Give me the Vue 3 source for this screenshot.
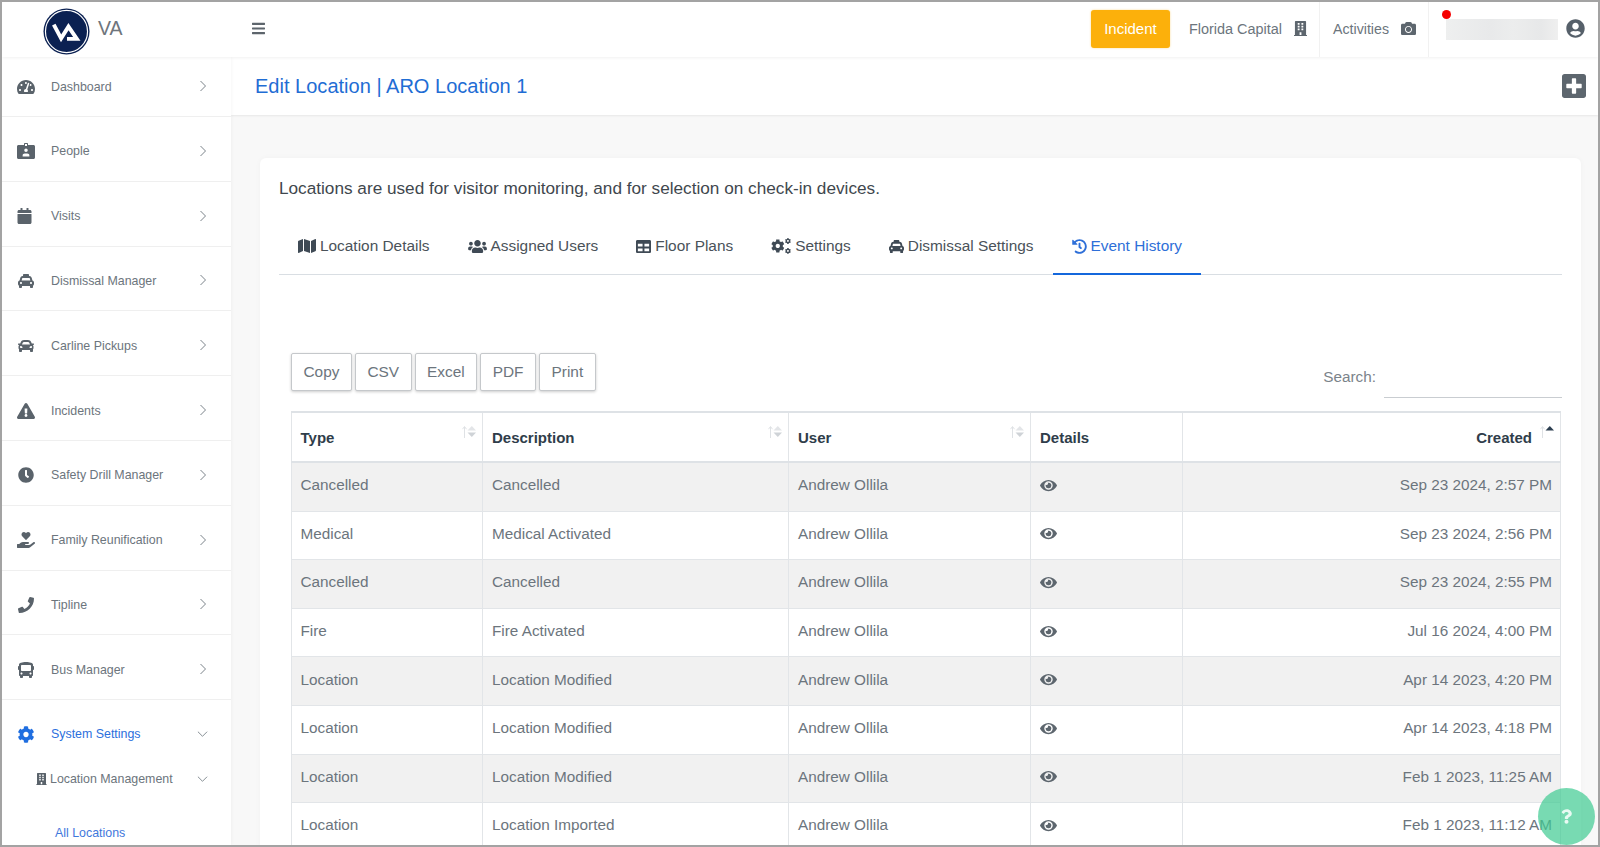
<script setup>
const icons = {
  bars: [448, 'M16 132h416c8.837 0 16-7.163 16-16V76c0-8.837-7.163-16-16-16H16C7.163 60 0 67.163 0 76v40c0 8.837 7.163 16 16 16zm0 160h416c8.837 0 16-7.163 16-16v-40c0-8.837-7.163-16-16-16H16c-8.837 0-16 7.163-16 16v40c0 8.837 7.163 16 16 16zm0 160h416c8.837 0 16-7.163 16-16v-40c0-8.837-7.163-16-16-16H16c-8.837 0-16 7.163-16 16v40c0 8.837 7.163 16 16 16z'],
  gauge: [576, 'M288 32C128.94 32 0 160.94 0 320c0 52.8 14.25 102.26 39.06 144.8 5.61 9.62 16.3 15.2 27.44 15.2h443c11.14 0 21.83-5.58 27.44-15.2C561.75 422.26 576 372.8 576 320c0-159.06-128.94-288-288-288zm0 64c14.71 0 26.58 10.13 30.32 23.65-1.11 2.26-2.64 4.23-3.45 6.67l-9.22 27.67c-5.13 3.49-10.97 6.01-17.64 6.01-17.67 0-32-14.33-32-32S270.33 96 288 96zM96 384c-17.67 0-32-14.33-32-32s14.33-32 32-32 32 14.33 32 32-14.33 32-32 32zm48-160c-17.67 0-32-14.33-32-32s14.33-32 32-32 32 14.33 32 32-14.33 32-32 32zm246.77-72.41l-61.33 184C343.13 347.33 352 364.54 352 384c0 11.72-3.38 22.55-8.88 32H232.88c-5.5-9.45-8.88-20.28-8.88-32 0-33.94 26.5-61.43 59.9-63.59l61.34-184.01c4.17-12.56 17.73-19.45 30.36-15.17 12.57 4.19 19.35 17.79 15.17 30.36zm14.66 57.2l15.52-46.55c3.47-1.29 7.13-2.23 11.05-2.23 17.67 0 32 14.33 32 32s-14.33 32-32 32c-11.38-.01-20.89-6.28-26.57-15.22zM480 384c-17.67 0-32-14.33-32-32s14.33-32 32-32 32 14.33 32 32-14.33 32-32 32z'],
  badge: [576, 'M48 64h176V32c0-17.7 14.3-32 32-32h64c17.7 0 32 14.3 32 32v32h176c26.5 0 48 21.500 48 48v352c0 26.500-21.500 48-48 48H48c-26.500 0-48-21.500-48-48V112c0-26.500 21.500-48 48-48zM256 32v64h64V32zM288 176a56 56 0 1 0 0 112 56 56 0 0 0 0-112zM180 432h216v-34c0-36-30-60-66-60h-84c-36 0-66 24-66 60z'],
  calendar: [448, 'M12 192h424c6.6 0 12 5.4 12 12v260c0 26.5-21.5 48-48 48H48c-26.5 0-48-21.5-48-48V204c0-6.6 5.4-12 12-12zm436-44v-36c0-26.5-21.5-48-48-48h-48V12c0-6.6-5.4-12-12-12h-40c-6.6 0-12 5.4-12 12v52H160V12c0-6.6-5.4-12-12-12h-40c-6.6 0-12 5.4-12 12v52H48C21.5 64 0 85.5 0 112v36c0 6.6 5.4 12 12 12h424c6.6 0 12-5.4 12-12z'],
  taxi: [512, 'M462 241.64l-22-84.84c-9.6-35.2-41.6-60.8-76.8-60.8H352V64c0-17.67-14.33-32-32-32H192c-17.67 0-32 14.33-32 32v32h-11.2c-35.2 0-67.2 25.6-76.8 60.8l-22 84.84C21.41 248.04 0 273.47 0 304v48c0 23.63 12.95 44.04 32 55.12V448c0 17.67 14.33 32 32 32h32c17.67 0 32-14.33 32-32v-32h256v32c0 17.67 14.33 32 32 32h32c17.67 0 32-14.33 32-32v-40.88c19.05-11.09 32-31.5 32-55.12v-48c0-30.53-21.41-55.96-50-62.36zM96 352c-17.67 0-32-14.33-32-32s14.33-32 32-32 32 14.33 32 32-14.33 32-32 32zm20.55-112l17.2-66.36c2.23-8.16 9.59-13.64 15.06-13.64h214.4c5.47 0 12.83 5.48 14.72 12.41L395.45 240h-278.9zM416 352c-17.67 0-32-14.33-32-32s14.33-32 32-32 32 14.33 32 32-14.33 32-32 32z'],
  car: [512, 'M499.99 176h-59.87l-16.64-41.6C406.38 91.63 365.57 64 319.5 64h-127c-46.06 0-86.88 27.63-103.99 70.4L71.87 176H12.01C4.2 176-1.53 183.34.37 190.91l6 24C7.7 220.25 12.5 224 18.01 224h20.07C24.65 235.73 16 252.78 16 272v48c0 16.12 6.16 30.67 16 41.93V416c0 17.67 14.33 32 32 32h32c17.67 0 32-14.33 32-32v-32h256v32c0 17.67 14.33 32 32 32h32c17.67 0 32-14.33 32-32v-54.07c9.84-11.25 16-25.8 16-41.93v-48c0-19.22-8.65-36.27-22.07-48H494c5.51 0 10.31-3.75 11.64-9.09l6-24c1.89-7.57-3.84-14.91-11.65-14.91zm-352.06-17.83c7.29-18.22 24.94-30.17 44.57-30.17h127c19.63 0 37.28 11.95 44.57 30.17L384 208H128l19.93-49.83zM96 319.8c-19.2 0-32-12.76-32-31.9S76.8 256 96 256s48 28.71 48 47.85-28.8 15.95-48 15.95zm320 0c-19.2 0-48 3.19-48-15.95S396.8 256 416 256s32 12.76 32 31.9-12.8 31.9-32 31.9z'],
  warning: [576, 'M569.517 440.013C587.975 472.007 564.806 512 527.94 512H48.054c-36.937 0-59.999-40.055-41.577-71.987L246.423 23.985c18.467-32.009 64.72-31.951 83.154 0l239.94 416.028zM288 354c-25.405 0-46 20.595-46 46s20.595 46 46 46 46-20.595 46-46-20.595-46-46-46zm-43.673-165.346l7.418 136c.347 6.364 5.609 11.346 11.982 11.346h48.546c6.373 0 11.635-4.982 11.982-11.346l7.418-136c.375-6.874-5.098-12.654-11.982-12.654h-63.383c-6.884 0-12.356 5.78-11.981 12.654z'],
  clock: [512, 'M256,8C119,8,8,119,8,256S119,504,256,504,504,393,504,256,393,8,256,8Zm92.49,313h0l-20,25a16,16,0,0,1-22.49,2.5h0l-67-49.72a40,40,0,0,1-15-31.23V112a16,16,0,0,1,16-16h32a16,16,0,0,1,16,16V256l58,42.5A16,16,0,0,1,348.49,321Z'],
  hand: [576, 'M275.3 250.5c7 7.4 18.4 7.4 25.5 0l108.9-114.2c31.6-33.2 29.8-88.2-5.6-118.8-30.8-26.7-76.7-21.9-104.9 7.7L288 36.9l-11.1-11.6C248.7-4.4 202.8-9.2 172 17.5c-35.3 30.6-37.2 85.6-5.6 118.8l108.9 114.2zm290 77.6c-11.8-10.7-30.2-10-42.6 0L430.3 402c-11.3 9.1-25.4 14-40 14H272c-8.8 0-16-7.2-16-16s7.2-16 16-16h78.3c15.9 0 30.7-10.9 33.3-26.6 3.3-20-12.1-37.4-31.6-37.4H192c-27 0-53.1 9.3-74.1 26.3L71.4 384H16c-8.8 0-16 7.2-16 16v96c0 8.8 7.2 16 16 16h356.8c14.5 0 28.6-4.9 40-14l151.2-121c15.2-12.2 16.4-35.1 1.3-48.9z'],
  phone: [512, 'M493.4 24.6l-104-24c-11.3-2.6-22.9 3.3-27.5 13.9l-48 112c-4.2 9.8-1.4 21.3 6.9 28l60.6 49.6c-36 76.7-98.9 140.5-177.2 177.2l-49.6-60.6c-6.8-8.3-18.2-11.1-28-6.9l-112 48C3.9 366.5-2 378.1.6 389.4l24 104C27.1 504.2 36.7 512 48 512c256.1 0 464-207.5 464-464 0-11.2-7.7-20.9-18.6-23.4z'],
  bus: [512, 'M488 128h-8V80c0-44.8-99.2-80-224-80S32 35.2 32 80v48h-8c-13.25 0-24 10.74-24 24v80c0 13.25 10.75 24 24 24h8v160c0 17.67 14.33 32 32 32v32c0 17.67 14.33 32 32 32h32c17.67 0 32-14.33 32-32v-32h192v32c0 17.67 14.33 32 32 32h32c17.67 0 32-14.33 32-32v-32h6.4c16 0 25.6-12.8 25.6-25.6V256h8c13.25 0 24-10.75 24-24v-80c0-13.26-10.75-24-24-24zM112 400c-17.67 0-32-14.33-32-32s14.33-32 32-32 32 14.33 32 32-14.33 32-32 32zm16-112c-17.67 0-32-14.33-32-32V128c0-17.67 14.33-32 32-32h256c17.67 0 32 14.33 32 32v128c0 17.67-14.33 32-32 32H128zm272 112c-17.67 0-32-14.33-32-32s14.33-32 32-32 32 14.33 32 32-14.33 32-32 32z'],
  cog: [512, 'M487.4 315.7l-42.6-24.6c4.3-23.2 4.3-47 0-70.2l42.6-24.6c4.9-2.8 7.1-8.6 5.5-14-11.1-35.6-30-67.8-54.7-94.6-3.8-4.1-10-5.1-14.8-2.3L380.8 110c-17.9-15.4-38.5-27.3-60.8-35.1V25.8c0-5.6-3.9-10.5-9.4-11.7-36.7-8.2-74.3-7.8-109.2 0-5.5 1.2-9.4 6.1-9.4 11.7V75c-22.2 7.9-42.8 19.8-60.8 35.1L88.7 85.5c-4.9-2.8-11-1.9-14.8 2.3-24.7 26.7-43.6 58.9-54.7 94.6-1.7 5.4.6 11.2 5.5 14L67.3 221c-4.3 23.2-4.3 47 0 70.2l-42.6 24.6c-4.9 2.8-7.1 8.6-5.5 14 11.1 35.6 30 67.8 54.7 94.6 3.8 4.1 10 5.1 14.8 2.3l42.6-24.6c17.9 15.4 38.5 27.3 60.8 35.1v49.2c0 5.6 3.9 10.5 9.4 11.7 36.7 8.2 74.3 7.8 109.2 0 5.5-1.2 9.4-6.1 9.4-11.7v-49.2c22.2-7.9 42.8-19.8 60.8-35.1l42.6 24.6c4.9 2.8 11 1.9 14.8-2.3 24.7-26.7 43.6-58.9 54.7-94.6 1.5-5.5-.7-11.3-5.6-14.1zM256 336c-44.1 0-80-35.9-80-80s35.9-80 80-80 80 35.9 80 80-35.9 80-80 80z'],
  building: [448, 'M436 480h-20V24c0-13.255-10.745-24-24-24H56C42.745 0 32 10.745 32 24v456H12c-6.627 0-12 5.373-12 12v20h448v-20c0-6.627-5.373-12-12-12zM128 76c0-6.627 5.373-12 12-12h40c6.627 0 12 5.373 12 12v40c0 6.627-5.373 12-12 12h-40c-6.627 0-12-5.373-12-12V76zm0 96c0-6.627 5.373-12 12-12h40c6.627 0 12 5.373 12 12v40c0 6.627-5.373 12-12 12h-40c-6.627 0-12-5.373-12-12v-40zm52 148h-40c-6.627 0-12-5.373-12-12v-40c0-6.627 5.373-12 12-12h40c6.627 0 12 5.373 12 12v40c0 6.627-5.373 12-12 12zm76 160h-64v-84c0-6.627 5.373-12 12-12h40c6.627 0 12 5.373 12 12v84zm64-172c0 6.627-5.373 12-12 12h-40c-6.627 0-12-5.373-12-12v-40c0-6.627 5.373-12 12-12h40c6.627 0 12 5.373 12 12v40zm0-96c0 6.627-5.373 12-12 12h-40c-6.627 0-12-5.373-12-12v-40c0-6.627 5.373-12 12-12h40c6.627 0 12 5.373 12 12v40zm0-96c0 6.627-5.373 12-12 12h-40c-6.627 0-12-5.373-12-12V76c0-6.627 5.373-12 12-12h40c6.627 0 12 5.373 12 12v40z'],
  camera: [512, 'M512 144v288c0 26.5-21.5 48-48 48H48c-26.5 0-48-21.5-48-48V144c0-26.5 21.5-48 48-48h88l12.3-32.9c7-18.7 24.9-31.1 44.9-31.1h125.5c20 0 37.9 12.4 44.9 31.1L376 96h88c26.5 0 48 21.5 48 48zM376 288c0-66.2-53.8-120-120-120s-120 53.8-120 120 53.8 120 120 120 120-53.8 120-120zm-32 0c0 48.5-39.5 88-88 88s-88-39.5-88-88 39.5-88 88-88 88 39.5 88 88z'],
  user: [496, 'M248 8C111 8 0 119 0 256s111 248 248 248 248-111 248-248S385 8 248 8zm0 96c48.6 0 88 39.4 88 88s-39.4 88-88 88-88-39.4-88-88 39.4-88 88-88zm0 344c-58.7 0-111.3-26.6-146.5-68.2 18.8-35.4 55.6-59.8 98.5-59.8 2.4 0 4.8.4 7.1 1.1 13 4.2 26.6 6.9 40.9 6.9 14.3 0 28-2.7 40.9-6.9 2.3-.7 4.7-1.1 7.1-1.1 42.9 0 79.7 24.4 98.5 59.8C359.3 421.4 306.7 448 248 448z'],
  plus: [448, 'M400 32H48C21.5 32 0 53.5 0 80v352c0 26.5 21.5 48 48 48h352c26.5 0 48-21.5 48-48V80c0-26.5-21.5-48-48-48zm-32 252c0 6.6-5.4 12-12 12h-92v92c0 6.6-5.4 12-12 12h-56c-6.6 0-12-5.4-12-12v-92H92c-6.6 0-12-5.4-12-12v-56c0-6.6 5.4-12 12-12h92v-92c0-6.6 5.4-12 12-12h56c6.6 0 12 5.4 12 12v92h92c6.6 0 12 5.4 12 12v56z'],
  map: [576, 'M0 117.66v346.32c0 11.32 11.43 19.06 21.94 14.86L160 416V32L20.12 87.95A32.006 32.006 0 0 0 0 117.66zM192 416l192 64V96L192 32v384zM554.06 33.16L416 96v384l139.88-55.95A31.996 31.996 0 0 0 576 394.34V48.02c0-11.32-11.43-19.06-21.94-14.86z'],
  users: [640, 'M96 224c35.3 0 64-28.7 64-64s-28.7-64-64-64-64 28.7-64 64 28.7 64 64 64zm448 0c35.3 0 64-28.7 64-64s-28.7-64-64-64-64 28.7-64 64 28.7 64 64 64zm32 32h-64c-17.6 0-33.5 7.1-45.1 18.6 40.3 22.1 68.9 62 75.1 109.4h66c17.7 0 32-14.3 32-32v-32c0-35.3-28.7-64-64-64zm-256 0c61.9 0 112-50.1 112-112S381.9 32 320 32 208 82.1 208 144s50.1 112 112 112zm76.8 32h-8.3c-20.8 10-43.9 16-68.5 16s-47.6-6-68.5-16h-8.3C179.6 288 128 339.6 128 403.2V432c0 26.5 21.5 48 48 48h288c26.5 0 48-21.5 48-48v-28.8c0-63.6-51.6-115.2-115.2-115.2zm-223.7-13.4C161.5 263.1 145.6 256 128 256H64c-35.3 0-64 28.7-64 64v32c0 17.7 14.3 32 32 32h65.9c6.3-47.4 34.9-87.3 75.2-109.4z'],
  table: [512, 'M464 32H48C21.49 32 0 53.49 0 80v352c0 26.51 21.49 48 48 48h416c26.51 0 48-21.49 48-48V80c0-26.51-21.49-48-48-48zM224 416H64v-96h160v96zm0-160H64v-96h160v96zm224 160H288v-96h160v96zm0-160H288v-96h160v96z'],
  history: [512, 'M504 255.531c.253 136.64-111.18 248.372-247.82 248.468-59.015.042-113.223-20.53-155.822-54.911-11.077-8.94-11.905-25.541-1.839-35.607l11.267-11.267c8.609-8.609 22.353-9.551 31.891-1.984C173.062 425.135 212.781 440 256 440c101.705 0 184-82.311 184-184 0-101.705-82.311-184-184-184-48.814 0-93.149 18.969-126.068 49.932l50.754 50.754c10.08 10.08 2.941 27.314-11.313 27.314H24c-8.837 0-16-7.163-16-16V38.627c0-14.254 17.234-21.393 27.314-11.314l49.372 49.372C129.209 34.136 189.552 8 256 8c136.81 0 247.747 110.78 248 247.531zm-180.912 78.784l9.823-12.63c8.138-10.463 6.253-25.542-4.21-33.679L288 256.349V152c0-13.255-10.745-24-24-24h-16c-13.255 0-24 10.745-24 24v135.651l65.409 50.874c10.463 8.137 25.541 6.253 33.679-4.21z'],
  eye: [576, 'M572.52 241.4C518.29 135.59 410.93 64 288 64S57.68 135.64 3.48 241.41a32.35 32.35 0 0 0 0 29.19C57.71 376.41 165.07 448 288 448s230.32-71.64 284.52-177.41a32.35 32.35 0 0 0 0-29.19zM288 400a144 144 0 1 1 144-144 143.93 143.93 0 0 1-144 144zm0-240a95.31 95.31 0 0 0-25.31 3.79 47.85 47.85 0 0 1-66.9 66.9A95.78 95.78 0 1 0 288 160z'],
  question: [384, 'M202.021 0C122.202 0 70.503 32.703 29.914 91.026c-7.363 10.58-5.093 25.086 5.178 32.874l43.138 32.709c10.373 7.865 25.132 6.026 33.253-4.148 25.049-31.381 43.63-49.449 82.757-49.449 30.764 0 68.816 19.799 68.816 49.631 0 22.552-18.617 34.134-48.993 51.164-35.423 19.86-82.299 44.576-82.299 106.405V320c0 13.255 10.745 24 24 24h72.471c13.255 0 24-10.745 24-24v-5.773c0-42.86 125.268-44.645 125.268-160.627C377.504 66.256 286.902 0 202.021 0zM192 373.459c-38.196 0-69.271 31.075-69.271 69.271 0 38.195 31.075 69.27 69.271 69.27s69.271-31.075 69.271-69.271-31.075-69.27-69.271-69.27z'],
}

const nav = [
  { label: 'Dashboard', icon: 'gauge' },
  { label: 'People', icon: 'badge' },
  { label: 'Visits', icon: 'calendar', small: true },
  { label: 'Dismissal Manager', icon: 'taxi' },
  { label: 'Carline Pickups', icon: 'car' },
  { label: 'Incidents', icon: 'warning' },
  { label: 'Safety Drill Manager', icon: 'clock' },
  { label: 'Family Reunification', icon: 'hand' },
  { label: 'Tipline', icon: 'phone' },
  { label: 'Bus Manager', icon: 'bus' },
]

const tabs = [
  { label: 'Location Details', icon: 'map', size: 'w18' },
  { label: 'Assigned Users', icon: 'users', size: 'w19' },
  { label: 'Floor Plans', icon: 'table', size: 'w15' },
  { label: 'Settings', icon: 'cogs', size: 'w20' },
  { label: 'Dismissal Settings', icon: 'taxi', size: 'w15' },
  { label: 'Event History', icon: 'history', size: 'w15', active: true },
]

const buttons = ['Copy', 'CSV', 'Excel', 'PDF', 'Print']

const rows = [
  ['Cancelled', 'Cancelled', 'Sep 23 2024, 2:57 PM'],
  ['Medical', 'Medical Activated', 'Sep 23 2024, 2:56 PM'],
  ['Cancelled', 'Cancelled', 'Sep 23 2024, 2:55 PM'],
  ['Fire', 'Fire Activated', 'Jul 16 2024, 4:00 PM'],
  ['Location', 'Location Modified', 'Apr 14 2023, 4:20 PM'],
  ['Location', 'Location Modified', 'Apr 14 2023, 4:18 PM'],
  ['Location', 'Location Modified', 'Feb 1 2023, 11:25 AM'],
  ['Location', 'Location Imported', 'Feb 1 2023, 11:12 AM'],
]
</script>

<template>
  <div class="app">
    <header class="topbar">
      <div class="brand">
        <svg class="logo" viewBox="0 0 48 48">
          <circle cx="24" cy="24" r="23.500" fill="#0b2152" />
          <circle cx="24" cy="24" r="21.500" fill="none" stroke="#fff" stroke-width="1.200" />
          <path d="M11 17 L18.500 31 L26 19 L34.500 31.500 H24.500" fill="none" stroke="#fff" stroke-width="4" stroke-linejoin="miter" />
        </svg>
        <span class="brand-name">VA</span>
      </div>
      <svg class="burger" :viewBox="`0 0 ${icons.bars[0]} 512`"><path :d="icons.bars[1]" /></svg>
      <div class="top-right">
        <button class="incident">Incident</button>
        <div class="top-item first">
          <span>Florida Capital</span>
          <svg class="top-ic bld" :viewBox="`0 0 ${icons.building[0]} 512`"><path :d="icons.building[1]" /></svg>
        </div>
        <div class="top-item second">
          <span>Activities</span>
          <svg class="top-ic cam" :viewBox="`0 0 ${icons.camera[0]} 512`"><path :d="icons.camera[1]" /></svg>
        </div>
        <div class="account">
          <i class="dot"></i>
          <div class="blurred"></div>
          <svg class="avatar" :viewBox="`0 0 ${icons.user[0]} 512`"><path :d="icons.user[1]" /></svg>
        </div>
      </div>
    </header>

    <div class="body">
      <aside class="sidebar">
        <div v-for="item in nav" :key="item.label" class="nav-row">
          <span class="nav-icon">
            <svg :class="{ narrow: item.small }" :viewBox="`0 0 ${icons[item.icon][0]} 512`"><path :d="icons[item.icon][1]" /></svg>
          </span>
          <span class="nav-label">{{ item.label }}</span>
          <svg class="chev" viewBox="0 0 8 12"><path d="M1.500 1 L6.500 6 L1.500 11" /></svg>
        </div>
        <div class="nav-open">
          <div class="open-row active">
            <span class="nav-icon"><svg class="blue" viewBox="0 0 512 512"><path :d="icons.cog[1]" /></svg></span>
            <span class="nav-label">System Settings</span>
            <svg class="chev down" viewBox="0 0 12 8"><path d="M1 1.500 L6 6.500 L11 1.500" /></svg>
          </div>
          <div class="open-row sub">
            <svg class="sub-ic" viewBox="0 0 448 512"><path :d="icons.building[1]" /></svg>
            <span class="nav-label">Location Management</span>
            <svg class="chev down" viewBox="0 0 12 8"><path d="M1 1.500 L6 6.500 L11 1.500" /></svg>
          </div>
          <a class="leaf">All Locations</a>
        </div>
      </aside>

      <main class="main">
        <div class="titlebar">
          <h1>Edit Location | ARO Location 1</h1>
          <svg class="add" viewBox="0 32 448 448"><path :d="icons.plus[1]" /></svg>
        </div>
        <section class="card">
          <p class="intro">Locations are used for visitor monitoring, and for selection on check-in devices.</p>
          <nav class="tabs">
            <a v-for="t in tabs" :key="t.label" class="tab" :class="{ on: t.active }">
              <svg v-if="t.icon === 'cogs'" class="tab-ic" :class="t.size" viewBox="0 0 640 512">
                <path :d="icons.cog[1]" transform="translate(0 38) scale(.85)" />
                <path :d="icons.cog[1]" transform="translate(445 0) scale(.38)" />
                <path :d="icons.cog[1]" transform="translate(445 317) scale(.38)" />
              </svg>
              <svg v-else class="tab-ic" :class="t.size" :viewBox="`0 0 ${icons[t.icon][0]} 512`"><path :d="icons[t.icon][1]" /></svg>
              <span>{{ t.label }}</span>
            </a>
          </nav>

          <div class="panel">
            <div class="toolbar">
              <div class="btns">
                <button v-for="b in buttons" :key="b" class="dt-btn">{{ b }}</button>
              </div>
              <label class="search">
                <span>Search:</span>
                <input type="text" />
              </label>
            </div>
            <table class="grid">
              <colgroup>
                <col class="c1" /><col class="c2" /><col class="c3" /><col class="c4" /><col />
              </colgroup>
              <thead>
                <tr>
                  <th v-for="h in ['Type', 'Description', 'User']" :key="h">
                    {{ h }}
                    <svg class="sort" viewBox="0 0 14 14">
                      <path d="M2.500 13V2M.5 4.200 2.500 1.500l2 2.700" fill="none" stroke="#dfe2e5" stroke-width="1" />
                      <path d="M5.500 5.500 9.800 1l4.200 4.500z" fill="#e3e5e8" />
                      <path d="M5.500 7.500 9.800 12 14 7.500z" fill="#cfd3d7" />
                    </svg>
                  </th>
                  <th>Details</th>
                  <th class="right">
                    Created
                    <svg class="sort" viewBox="0 0 14 14">
                      <path d="M2.500 13V2M.5 4.200 2.500 1.500l2 2.700" fill="none" stroke="#dfe2e5" stroke-width="1" />
                      <path d="M5.500 5.500 9.800 1l4.200 4.500z" fill="#2c3e50" />
                    </svg>
                  </th>
                </tr>
              </thead>
              <tbody>
                <tr v-for="(r, i) in rows" :key="i">
                  <td>{{ r[0] }}</td>
                  <td>{{ r[1] }}</td>
                  <td>Andrew Ollila</td>
                  <td><svg class="eye" viewBox="0 0 576 512"><path :d="icons.eye[1]" /></svg></td>
                  <td class="right">{{ r[2] }}</td>
                </tr>
              </tbody>
            </table>
          </div>
        </section>
      </main>
    </div>

    <button class="help" aria-label="Help">
      <svg viewBox="0 0 384 512"><path :d="icons.question[1]" /></svg>
    </button>
  </div>
</template>

<style>
html, body { margin: 0; overflow: hidden; background: #fff; }
</style>

<style scoped>
.app {
  position: relative;
  width: 1600px;
  height: 847px;
  box-sizing: border-box;
  border: 2px solid #a3a3a3;
  overflow: hidden;
  background: #f8f8f8;
  font-family: "Liberation Sans", Arial, sans-serif;
  color: #6c757d;
  display: flex;
  flex-direction: column;
}
svg { fill: currentColor; display: block; }

.topbar {
  flex: none;
  height: 55px;
  background: #fff;
  display: flex;
  align-items: center;
  position: relative;
  z-index: 3;
  box-shadow: 0 1px 3px rgba(0, 0, 0, .06);
}
.brand { width: 250px; display: flex; align-items: center; padding-left: 41px; box-sizing: border-box; }
.logo { width: 47px; height: 47px; flex: none; margin-top: 3px; }
.brand-name { margin: 0 0 2px 8px; font-size: 19.500px; color: #6e757c; }
.burger { width: 13px; height: 15px; margin-bottom: 2px; color: #5d656c; }
.top-right { margin-left: auto; display: flex; align-items: center; height: 100%; }
.incident {
  width: 79px;
  height: 38px;
  margin-bottom: 2px;
  border: 0;
  border-radius: 3px;
  background: #fcb00b;
  color: #fff;
  font: 15px "Liberation Sans", Arial, sans-serif;
  box-shadow: 0 0 2px rgba(252, 176, 11, .5);
}
.top-item {
  display: flex;
  align-items: center;
  height: 100%;
  box-sizing: border-box;
  padding: 0 12px 2px 13px;
  border-right: 1px solid #f1f1f1;
  font-size: 14.200px;
  color: #6c757d;
}
.top-item.first { padding-left: 19px; font-size: 14.450px; }
.top-ic { color: #5d666e; margin-left: 12px; }
.bld { width: 13px; height: 15px; }
.cam { width: 15px; height: 15px; }
.account { position: relative; display: flex; align-items: center; padding: 0 13px 0 17px; }
.dot { position: absolute; left: 13px; top: -9px; width: 9px; height: 9px; border-radius: 50%; background: #f50000; }
.blurred {
  width: 112px;
  height: 21px;
  background: linear-gradient(90deg, #eeefef, #e8e9ea 40%, #eceded 60%, #e7e8e9 85%, #efefef);
}
.avatar { width: 19px; height: 19px; margin: 0 0 3px 8px; color: #56606a; }

.body { flex: 1; min-height: 0; display: flex; }
.sidebar {
  flex: none;
  width: 229px;
  background: #fff;
  position: relative;
  z-index: 2;
  box-shadow: 1px 0 3px rgba(0, 0, 0, .03);
}
.nav-row {
  height: 64.800px;
  box-sizing: border-box;
  padding-top: 5px;
  display: flex;
  align-items: center;
  border-bottom: 1px solid #efefef;
}
.nav-row:first-child { height: 60px; padding-top: 0; }
.nav-icon { width: 49px; padding-left: 15px; box-sizing: border-box; flex: none; }
.nav-icon svg { width: 18px; height: 16px; color: #5a636b; }
.nav-icon svg.narrow { width: 15px; height: 16px; }
.nav-icon svg.blue { color: #1f6ee0; height: 17px; }
.nav-label { font-size: 12.400px; color: #6c757d; white-space: nowrap; }
.chev { width: 8px; height: 12px; margin: 0 24px 1px auto; fill: none; stroke: #7b838a; stroke-width: 1; }
.chev.down { width: 11px; height: 8px; margin: 0 23px 0 auto; }
.nav-open { padding-top: 26px; }
.open-row { display: flex; align-items: center; height: 16px; }
.open-row.active .nav-label { color: #2c6fdd; }
.open-row.sub { margin-top: 29px; }
.sub-ic { width: 11px; height: 12px; margin-left: 34px; margin-right: 3px; color: #5a636b; }
.leaf { display: block; margin: 39px 0 0 53px; font-size: 12.400px; color: #3f78dc; }

.main { flex: 1; min-width: 0; overflow: hidden; }
.titlebar {
  height: 58px;
  box-sizing: border-box;
  background: #fff;
  display: flex;
  align-items: center;
  padding: 0 12px 0 24px;
  box-shadow: 0 1px 2px rgba(0, 0, 0, .07);
}
.titlebar h1 { margin: 0; font-size: 20.050px; font-weight: 400; color: #1f6dd4; }
.add { width: 24px; height: 24px; margin-left: auto; color: #5d666e; }

.card {
  margin: 43px 17px 0 29px;
  padding: 20px 19px 40px;
  background: #fff;
  border-radius: 6px;
  box-shadow: 0 0 6px rgba(0, 0, 0, .03);
}
.intro { margin: 0; font-size: 17.200px; line-height: 20px; color: #3f474e; }
.tabs { display: flex; margin-top: 19px; height: 58px; border-bottom: 1px solid #d9dee3; box-sizing: border-box; }
.tab {
  display: flex;
  align-items: center;
  gap: 4px;
  padding: 0 19px;
  height: 58px;
  box-sizing: border-box;
  font-size: 15.400px;
  color: #4a5259;
}
.tab.on { color: #2e6fd8; box-shadow: inset 0 -2px 0 #1467dc; }
.tab-ic { height: 15px; color: #3f4a55; flex: none; }
.tab-ic.w15 { width: 15px; }
.tab-ic.w18 { width: 18px; height: 16px; }
.tab-ic.w19 { width: 19px; }
.tab-ic.w20 { width: 20px; height: 16px; }
.tab.on .tab-ic { color: #2e6fd8; }

.panel { padding-left: 12px; }
.toolbar { display: flex; justify-content: space-between; margin-top: 78px; height: 58px; }
.btns { display: flex; gap: 3px; align-items: flex-start; }
.dt-btn {
  height: 38px;
  padding: 0 11.500px;
  background: #fff;
  border: 1px solid #c5c8cb;
  border-radius: 2px;
  box-shadow: 0 1px 3px rgba(0, 0, 0, .2);
  color: #6c757d;
  font: 15.400px "Liberation Sans", Arial, sans-serif;
}
.search { display: flex; align-items: flex-start; gap: 8px; font-size: 15.300px; color: #7b838a; }
.search span { margin-top: 15px; }
.search input { width: 178px; height: 45px; box-sizing: border-box; border: 0; border-bottom: 1px solid #c9cdd1; outline: 0; background: transparent; }

.grid { width: 1270px; table-layout: fixed; border-collapse: collapse; font-size: 15.300px; color: #6c757d; }
.c1 { width: 191px; } .c2 { width: 306px; } .c3 { width: 242px; } .c4 { width: 152px; }
.grid th, .grid td { border: 1px solid #e2e5e8; padding: 0 9px; text-align: left; }
.grid th:first-child, .grid td:first-child { padding-left: 8.500px; }
.grid th {
  position: relative;
  height: 48px;
  border-top: 2px solid #dee2e6;
  border-bottom: 2px solid #dee2e6;
  font-size: 15px;
  font-weight: 700;
  color: #2f3d4a;
}
.grid td { height: 44.600px; padding-bottom: 3px; box-sizing: content-box; }
.grid tbody tr:nth-child(odd) { background: #f1f1f1; }
.grid .right { text-align: right; padding-right: 28px; }
.grid td.right { padding-right: 8px; }
.sort { position: absolute; right: 6px; top: 12px; width: 14px; height: 14px; }
.eye { width: 17px; height: 15px; color: #5d666e; }

.help {
  position: absolute;
  right: 3px;
  bottom: 0;
  width: 57px;
  height: 57px;
  padding: 0;
  border: 0;
  border-radius: 50%;
  background: rgba(62, 203, 146, .7);
  color: #e9faf3;
  display: flex;
  align-items: center;
  justify-content: center;
  z-index: 5;
}
.help svg { width: 11px; height: 15px; }
</style>
